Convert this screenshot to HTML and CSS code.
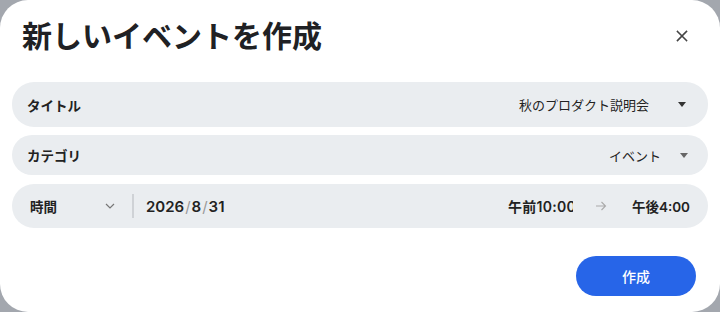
FILE: index.html
```html
<!DOCTYPE html>
<html lang="ja">
<head>
<meta charset="utf-8">
<link rel="stylesheet" href="styles.css">
</head>
<body>
<div class="dialog">
  <div class="header">
    <h1 class="title">新しいイベントを作成</h1>
    <button class="close" aria-label="閉じる">
      <svg width="12" height="12" viewBox="0 0 12 12"><path d="M1.5 1.5L10.5 10.5M10.5 1.5L1.5 10.5" stroke="#444" stroke-width="1.6" stroke-linecap="square"/></svg>
    </button>
  </div>
  <div class="rows">
    <div class="row r1">
      <span class="label">タイトル</span>
      <span class="value">秋のプロダクト説明会</span>
      <span class="tri"></span>
    </div>
    <div class="row r2">
      <span class="label">カテゴリ</span>
      <span class="value">イベント</span>
      <span class="tri light"></span>
    </div>
    <div class="row r3">
      <span class="label time-label">時間</span>
      <svg class="chev" width="10" height="6" viewBox="0 0 10 6"><path d="M1 1L5 5L9 1" fill="none" stroke="#777" stroke-width="1.2"/></svg>
      <span class="divider"></span>
      <span class="date">2026<span class="slash">/</span>8<span class="slash">/</span>31</span>
      <span class="spacer"></span>
      <span class="time start">午前10:00</span>
      <svg class="arrow" width="12" height="10" viewBox="0 0 12 10"><path d="M1 5H10.5M6.5 1L10.5 5L6.5 9" fill="none" stroke="#aaa" stroke-width="1.1"/></svg>
      <span class="time end">午後4:00</span>
    </div>
  </div>
  <div class="footer">
    <button class="create">作成</button>
  </div>
</div>
</body>
</html>
```
FILE: styles.css
```css
* { box-sizing: border-box; }
html, body { margin: 0; padding: 0; }
body {
  width: 720px;
  height: 312px;
  background: #a3a7ae;
  font-family: Inter, "Noto Sans CJK JP", sans-serif;
  color: #222;
  overflow: hidden;
}
.dialog {
  width: 720px;
  height: 312px;
  background: #fff;
  border-radius: 28px;
  display: flex;
  flex-direction: column;
}
.header {
  display: flex;
  justify-content: space-between;
  align-items: flex-start;
  padding: 16px 32px 0 22px;
  height: 70px;
}
.title {
  margin: 0;
  font-size: 30px;
  line-height: 40px;
  font-weight: 700;
  color: #202124;
}
.close {
  border: none;
  background: none;
  padding: 0;
  margin-top: 14px;
  width: 12px;
  height: 12px;
  display: flex;
}
.rows {
  margin: 12px 12px 0;
  display: flex;
  flex-direction: column;
  gap: 8px;
}
.row {
  height: 44px;
  background: #eaedf0;
  border-radius: 22px;
  display: flex;
  align-items: center;
  padding: 0 22px 0 15px;
}
.r1 { height: 45px; }
.r2 { height: 40px; }
.r3 { margin-top: 1px; }
.label {
  font-size: 13.5px;
  font-weight: 700;
  color: #222;
  flex: 1;
}
.value {
  font-size: 13px;
  color: #222;
}
.tri {
  width: 0;
  height: 0;
  border-left: 4.5px solid transparent;
  border-right: 4.5px solid transparent;
  border-top: 5px solid #333;
  margin-left: 29px;
}
.tri.light { border-top-color: #666; margin-left: 19px; margin-right: -2px; }
.r3 { padding-left: 18px; padding-right: 18px; }
.time-label { flex: none; width: 75px; }
.chev { flex: none; }
.divider {
  width: 2px;
  height: 24px;
  background: #cfd2d6;
  margin-left: 17px;
  margin-right: 12px;
}
.date {
  font-size: 15px;
  font-weight: 600;
  color: #222;
}
.slash { color: #999; font-weight: 400; margin: 0 1px; }
.spacer { flex: 1; }
.time {
  font-size: 13.5px;
  font-weight: 600;
  color: #222;
  white-space: nowrap;
}
.time.start {
  font-size: 14px;
  letter-spacing: 0.3px;
  width: 65px;
  overflow: hidden;
}
.arrow { margin: 0 25px 0 22px; flex: none; }
.footer {
  margin-top: auto;
  display: flex;
  justify-content: flex-end;
  padding: 0 24px 16px;
}
.create {
  width: 120px;
  height: 40px;
  border: none;
  border-radius: 20px;
  background: #2765e8;
  color: #fff;
  font-family: Inter, "Noto Sans CJK JP", sans-serif;
  font-size: 14px;
  font-weight: 500;
}
```
